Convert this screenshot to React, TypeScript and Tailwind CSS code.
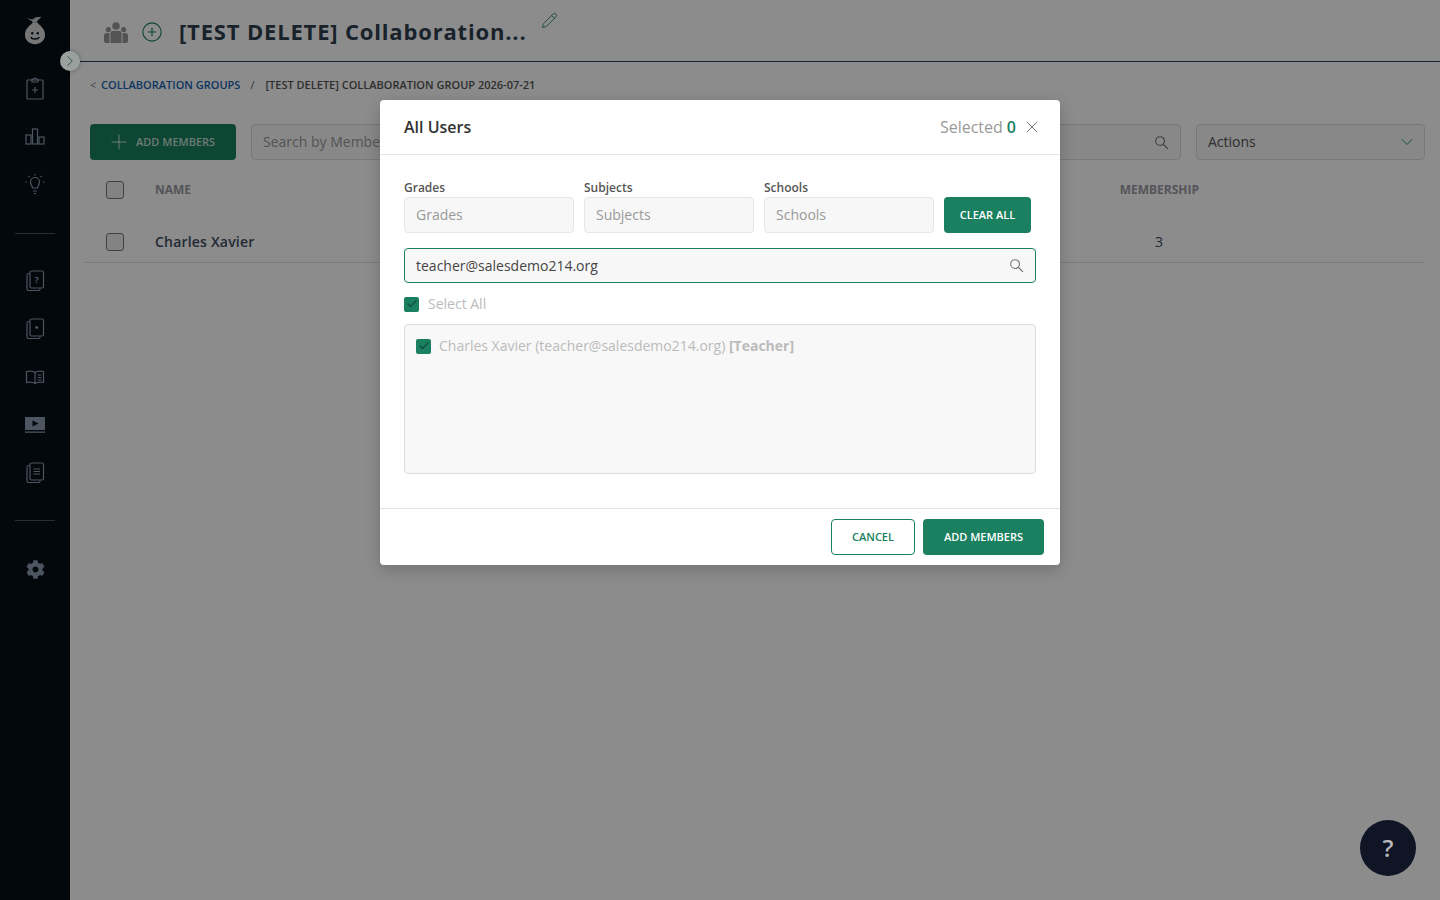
import { Check, ChevronDown, ChevronRight, CirclePlus, Pencil, Plus, X } from 'lucide-react';
import { FaCog } from 'react-icons/fa';

function NavIcon({ children }: { children: React.ReactNode }) {
  return (
    <svg viewBox="0 0 24 24" fill="none" stroke="#8c9bb0" strokeWidth="1.2" className="w-6 h-6">
      {children}
    </svg>
  );
}

function CardStack({ children }: { children?: React.ReactNode }) {
  return (
    <NavIcon>
      <path d="M6 4.500H5a1.500 1.500 0 0 0-1.500 1.500v14A1.500 1.500 0 0 0 5 21.500h10a1.500 1.500 0 0 0 1.500-1.500v-.5" transform="translate(0.500 0)" />
      <rect x="7" y="2" width="13.500" height="17" rx="1.500" />
      {children}
    </NavIcon>
  );
}

function SearchGlyph() {
  return (
    <svg viewBox="0 0 16 16" fill="none" stroke="#777" strokeWidth="1.2" className="w-[15px] h-[15px]">
      <circle cx="6.500" cy="6.500" r="4.700" />
      <path d="M10 10l4.800 4.800" strokeWidth="1.500" />
    </svg>
  );
}

function Sidebar() {
  return (
    <aside className="w-[70px] shrink-0 h-full bg-[#040f17] flex flex-col items-center">
      <svg viewBox="0 0 24 32" className="w-[22px] h-[31px] mt-[15px]">
        <path d="M3 2.500l6 1.500 4-2.500 6-.5-4 4-1.500 2h-4L8.500 5.500z" fill="#c9c9c9" />
        <path d="M9.500 7h5C16 10 23 13 23 21c0 6-5.500 10-11 10S1 27 1 21c0-8 7-11 8.500-14z" fill="#d8d8d8" />
        <circle cx="9" cy="19" r="1.300" fill="#040f17" />
        <circle cx="15" cy="19" r="1.300" fill="#040f17" />
        <path d="M7.500 23c1 3 8 3 9 0" stroke="#040f17" strokeWidth="1.500" fill="none" />
      </svg>
      <div className="mt-[30px] flex flex-col items-center gap-6">
        <NavIcon>
          <rect x="4" y="4" width="16" height="19" rx="0.500" />
          <path d="M9 6V3h2l1-1 1 1h2v3z" />
          <path d="M12 11v6M9 14h6" />
        </NavIcon>
        <NavIcon>
          <rect x="3" y="11" width="5" height="9" />
          <rect x="9.500" y="5" width="5" height="15" />
          <rect x="16" y="13" width="5" height="7" />
        </NavIcon>
        <NavIcon>
          <path d="M9.500 16c0-2-2-3-2-6a4.500 4.500 0 0 1 9 0c0 3-2 4-2 6z" />
          <path d="M10 19h4M11 21.500h2M12 2v1.500M4 10H2.500M21.500 10H20M5.500 4l1 1M18.500 4l-1 1" />
        </NavIcon>
      </div>
      <div className="w-10 h-px bg-[#4a5563] mt-[37px]" />
      <div className="mt-[35px] flex flex-col items-center gap-6">
        <CardStack>
          <text x="13.700" y="14" fontSize="9" fontWeight="700" fill="#8c9bb0" stroke="none" textAnchor="middle" fontFamily="Open Sans, sans-serif">?</text>
        </CardStack>
        <CardStack>
          <circle cx="13.700" cy="10.500" r="1.400" fill="#8c9bb0" stroke="none" />
        </CardStack>
        <NavIcon>
          <path d="M12 7.500C10 6 6 6 3.500 6.500v11c2.500-.5 6.500-.5 8.500 1 2-1.500 6-1.500 8.500-1v-11C18 6 14 6 12 7.500zM12 7.500v11" />
          <path d="M14.500 10h4M14.500 12.500h4M14.500 15h4" />
        </NavIcon>
        <svg viewBox="0 0 24 24" className="w-6 h-6">
          <rect x="2" y="4" width="20" height="13" rx="0.500" fill="#8c9bb0" />
          <path d="M9.500 7.500l6 3-6 3z" fill="#040f17" />
          <rect x="2" y="18.500" width="20" height="1.300" fill="#8c9bb0" />
        </svg>
        <CardStack>
          <path d="M10.500 8h6.500M10.500 10.500h6.500M10.500 13h6.500" />
        </CardStack>
      </div>
      <div className="w-10 h-px bg-[#4a5563] mt-[35px]" />
      <FaCog className="w-[19px] h-[19px] text-[#8c9bb0] mt-[39px]" />
    </aside>
  );
}

function Box() {
  return <span className="block shrink-0 w-[18px] h-[18px] rounded-[3px] border border-[#777] bg-[#eee]" />;
}

function Tick() {
  return (
    <span className="flex items-center justify-center shrink-0 w-[15px] h-[15px] rounded-[2px] bg-[#1a8060] text-[#0c4f3b]">
      <Check className="w-3 h-3" strokeWidth={2.5} />
    </span>
  );
}

function Page() {
  return (
    <main className="flex-1 min-w-0 h-full bg-white">
      <header className="ml-[10px] h-[62px] border-b border-[#2a3f58] flex items-start pl-6">
        <svg viewBox="0 0 24 21" fill="#999" className="w-6 h-[21px] mt-[22px]">
          <circle cx="12" cy="4" r="3.800" />
          <circle cx="4.300" cy="7.500" r="2.600" />
          <circle cx="19.700" cy="7.500" r="2.600" />
          <path d="M8.500 9h7a2 2 0 0 1 2 2v10h-11V11a2 2 0 0 1 2-2z" />
          <path d="M2.500 11h3v10H2a2 2 0 0 1-2-2v-5.500A2.500 2.500 0 0 1 2.500 11z" />
          <path d="M18.500 11h3a2.500 2.500 0 0 1 2.500 2.500V19a2 2 0 0 1-2 2h-3.500z" />
        </svg>
        <CirclePlus className="w-[22px] h-[22px] text-[#1a8060] ml-[13px] mt-[21px]" strokeWidth={1.2} />
        <h1 className="ml-[16px] mt-[14px] text-[22px] leading-[34px] font-bold tracking-[0.83px] text-[#2f3f4f] whitespace-nowrap">
          [TEST DELETE] Collaboration...
        </h1>
        <Pencil className="w-[17px] h-[17px] text-[#1a8060] ml-[14px] mt-[12px]" strokeWidth={1.2} />
      </header>
      <nav className="ml-5 mt-[15px] flex items-center text-[11px] leading-[16px] font-semibold whitespace-nowrap">
        <span className="text-[#777] font-normal w-[11px]">&lt;</span>
        <span className="text-[#1a64b4]">COLLABORATION GROUPS</span>
        <span className="text-[#666] ml-[10px] mr-[11px] font-normal">/</span>
        <span className="text-[#555]">[TEST DELETE] COLLABORATION GROUP 2026-07-21</span>
      </nav>
      <div className="ml-5 mr-[15px] mt-[31px] flex gap-[15px]">
        <button className="w-[146px] h-9 rounded-[4px] bg-[#1a8060] flex items-center pl-[17px] gap-[5px] text-white/75 text-[11px] font-semibold">
          <Plus className="w-6 h-6" strokeWidth={1} />
          ADD MEMBERS
        </button>
        <div className="flex-1 h-9 rounded-[4px] border border-[#ddd] bg-[#f7f7f7] flex items-center justify-between pl-[11px] pr-[11px] text-sm text-[#999]">
          <span>Search by Member</span>
          <SearchGlyph />
        </div>
        <div className="w-[229px] h-9 rounded-[4px] border border-[#ddd] bg-[#f7f7f7] flex items-center justify-between pl-[11px] pr-[7px] text-sm text-[#555]">
          <span>Actions</span>
          <ChevronDown className="w-5 h-5 text-[#1f9a73]" strokeWidth={1.2} />
        </div>
      </div>
      <div className="ml-[15px] mr-[15px] mt-[21px] flex items-center h-[18px] pl-[21px] text-xs font-bold text-[#9a9aa2]">
        <Box />
        <span className="ml-[31px]">NAME</span>
        <span className="ml-auto mr-[226px]">MEMBERSHIP</span>
      </div>
      <div className="ml-[15px] mr-[15px] mt-[22px] flex items-center h-[42px] pl-[21px] border-b border-[#ddd] text-sm text-[#3d4d5f]">
        <Box />
        <span className="ml-[31px] font-semibold tracking-[0.2px]">Charles Xavier</span>
        <span className="ml-auto mr-[262px] font-medium">3</span>
      </div>
    </main>
  );
}

function Field({ label }: { label: string }) {
  return (
    <div className="w-[170px]">
      <div className="text-xs leading-[16px] font-semibold text-[#555]">{label}</div>
      <div className="mt-[1px] h-9 rounded-[4px] border border-[#e6e6e6] bg-[#f7f7f7] flex items-center pl-[11px] text-sm text-[#999]">
        {label}
      </div>
    </div>
  );
}

function AddMembersModal() {
  return (
    <div className="absolute left-[380px] top-[100px] w-[680px] h-[465px] rounded-[4px] bg-white shadow-[0_4px_16px_rgba(0,0,0,0.2)] flex flex-col">
      <div className="h-[55px] shrink-0 border-b border-[#e5e5e5] flex items-center pl-6 pr-[18px]">
        <h2 className="text-base font-semibold text-[#333]">All Users</h2>
        <span className="ml-auto text-base text-[#999]">Selected</span>
        <span className="ml-[4px] text-base font-semibold text-[#1a8060]">0</span>
        <X className="w-5 h-5 text-[#777] ml-[6px]" strokeWidth={1.2} />
      </div>
      <div className="flex-1 px-6 pt-[25px]">
        <div className="flex items-end gap-[10px]">
          <Field label="Grades" />
          <Field label="Subjects" />
          <Field label="Schools" />
          <button className="w-[87px] h-9 rounded-[4px] bg-[#1a8060] text-white text-[11px] font-semibold">CLEAR ALL</button>
        </div>
        <div className="mt-[15px] h-[35px] rounded-[4px] border border-[#1a8060] bg-[#f7f7f7] flex items-center justify-between pl-[11px] pr-[11px] text-sm text-[#444]">
          <span>teacher@salesdemo214.org</span>
          <SearchGlyph />
        </div>
        <div className="mt-[13px] flex items-center gap-[9px] h-[16px] text-sm text-[#bbb]">
          <Tick />
          <span>Select All</span>
        </div>
        <div className="mt-[12px] h-[150px] rounded-[4px] border border-[#ddd] bg-[#f8f8f8] pl-[11px] pt-[11px]">
          <div className="flex items-center gap-[8px] h-[20px] text-sm text-[#bbb]">
            <Tick />
            <span>Charles Xavier (teacher@salesdemo214.org) <b className="font-bold">[Teacher]</b></span>
          </div>
        </div>
      </div>
      <div className="h-[57px] shrink-0 border-t border-[#e5e5e5] flex items-center justify-end gap-2 pr-4">
        <button className="w-[84px] h-9 rounded-[4px] border border-[#1a8060] bg-white text-[#1a8060] text-[11px] font-semibold">CANCEL</button>
        <button className="w-[121px] h-9 rounded-[4px] bg-[#1a8060] text-white text-[11px] font-semibold">ADD MEMBERS</button>
      </div>
    </div>
  );
}

export default function App() {
  return (
    <div className="relative w-full h-[900px] overflow-hidden flex font-['Open_Sans',sans-serif]">
      <Sidebar />
      <Page />
      <div className="absolute inset-0 bg-black/45" />
      <span className="absolute left-[60px] top-[51px] w-5 h-5 rounded-full bg-[#99a09e] shadow-[0_0_4px_rgba(0,0,0,0.3)] flex items-center justify-center text-[#1c4a3c]">
        <ChevronRight className="w-[18px] h-[18px]" strokeWidth={1.1} />
      </span>
      <AddMembersModal />
      <button className="absolute left-[1360px] top-[820px] w-14 h-14 rounded-full bg-[#0f1525] flex items-center justify-center text-[24px] font-semibold text-[#b8b8b8]">
        ?
      </button>
    </div>
  );
}
